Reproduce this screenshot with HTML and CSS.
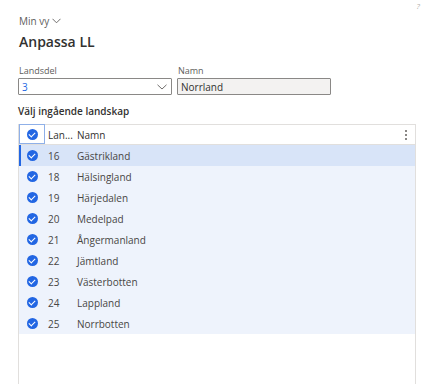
FILE: index.html
```html
<!DOCTYPE html>
<html lang="sv">
<head>
    <meta charset="UTF-8">
    <meta name="viewport" content="width=device-width, initial-scale=1.0">
    <title>Anpassa LL</title>
    <link rel="stylesheet" href="styles.css">
</head>
<body>
    <div class="topbar">
        <span class="help">?</span>
    </div>

    <div class="page">
        <div class="view">Min vy
            <svg class="view-chevron" width="9" height="6" viewBox="0 0 9 6"><path d="M0.5 0.8 L4.5 4.8 L8.5 0.8" fill="none" stroke="#605e5c" stroke-width="0.9"/></svg>
        </div>
        <h1 class="title">Anpassa LL</h1>

        <div class="fields">
            <div class="field">
                <label class="field-label">Landsdel</label>
                <div class="input select">
                    <span class="input-value link">3</span>
                    <svg class="select-chevron" width="10" height="6" viewBox="0 0 10 6"><path d="M0.5 0.8 L5 5 L9.5 0.8" fill="none" stroke="#605e5c" stroke-width="0.9"/></svg>
                </div>
            </div>
            <div class="field">
                <label class="field-label">Namn</label>
                <div class="input readonly">
                    <span class="input-value">Norrland</span>
                </div>
            </div>
        </div>

        <h2 class="section-title">Välj ingående landskap</h2>

        <div class="grid">
            <div class="grid-header">
                <div class="cell-check header-check">
                    <span class="check"></span>
                </div>
                <div class="cell-num">Lan...</div>
                <div class="cell-name">Namn</div>
                <div class="cell-more">
                    <svg width="4" height="12" viewBox="0 0 4 12"><rect x="1" y="1" width="2" height="2" fill="#8a8886"/><rect x="1" y="5" width="2" height="2" fill="#8a8886"/><rect x="1" y="9" width="2" height="2" fill="#8a8886"/></svg>
                </div>
            </div>

            <div class="grid-row active">
                <div class="cell-check"><span class="check"></span></div>
                <div class="cell-num">16</div>
                <div class="cell-name">Gästrikland</div>
            </div>
            <div class="grid-row">
                <div class="cell-check"><span class="check"></span></div>
                <div class="cell-num">18</div>
                <div class="cell-name">Hälsingland</div>
            </div>
            <div class="grid-row">
                <div class="cell-check"><span class="check"></span></div>
                <div class="cell-num">19</div>
                <div class="cell-name">Härjedalen</div>
            </div>
            <div class="grid-row">
                <div class="cell-check"><span class="check"></span></div>
                <div class="cell-num">20</div>
                <div class="cell-name">Medelpad</div>
            </div>
            <div class="grid-row">
                <div class="cell-check"><span class="check"></span></div>
                <div class="cell-num">21</div>
                <div class="cell-name">Ångermanland</div>
            </div>
            <div class="grid-row">
                <div class="cell-check"><span class="check"></span></div>
                <div class="cell-num">22</div>
                <div class="cell-name">Jämtland</div>
            </div>
            <div class="grid-row">
                <div class="cell-check"><span class="check"></span></div>
                <div class="cell-num">23</div>
                <div class="cell-name">Västerbotten</div>
            </div>
            <div class="grid-row">
                <div class="cell-check"><span class="check"></span></div>
                <div class="cell-num">24</div>
                <div class="cell-name">Lappland</div>
            </div>
            <div class="grid-row">
                <div class="cell-check"><span class="check"></span></div>
                <div class="cell-num">25</div>
                <div class="cell-name">Norrbotten</div>
            </div>
            <div class="grid-empty"></div>
        </div>
    </div>
</body>
</html>
```

FILE: styles.css
```css
:root {
    --text-color: #323130;
    --muted-color: #605e5c;
    --border-color: #e1dfdd;
    --check-color: #2266e3;
    --row-color: #eef3fc;
    --row-active-color: #d8e4f8;
}

* {
    margin: 0;
    padding: 0;
    box-sizing: border-box;
}

body {
    font-family: 'Open Sans', 'Liberation Sans', sans-serif;
    color: var(--text-color);
    background-color: #fff;
    overflow: hidden;
}

.topbar {
    height: 14px;
    display: flex;
    justify-content: flex-end;
    align-items: flex-start;
    padding-right: 9px;
}

.help {
    font-size: 8px;
    line-height: 11px;
    color: #b3b0ad;
    font-style: italic;
}

.page {
    padding-left: 18px;
}

.view {
    display: flex;
    align-items: center;
    gap: 3px;
    font-size: 10px;
    line-height: 14px;
    color: var(--muted-color);
    margin-left: 1px;
}

.title {
    font-size: 14px;
    font-weight: 600;
    line-height: 20px;
    margin-top: 4px;
    margin-left: 1px;
}

.fields {
    display: flex;
    gap: 5px;
    margin-top: 12px;
}

.field {
    display: flex;
    flex-direction: column;
    gap: 1px;
}

.field-label {
    font-size: 9px;
    line-height: 13px;
    color: var(--muted-color);
    margin-left: 1px;
}

.input {
    width: 154px;
    height: 17px;
    border: 1px solid #8a8886;
    border-radius: 1px;
    display: flex;
    align-items: center;
    justify-content: space-between;
    padding: 0 4px 0 3px;
    font-size: 10px;
}

.readonly {
    background-color: #f3f2f1;
}

.link {
    color: #2266e3;
}

.section-title {
    font-size: 10px;
    font-weight: 600;
    line-height: 14px;
    margin-top: 9px;
}

.grid {
    width: 398px;
    margin-top: 6px;
    border: 1px solid var(--border-color);
    border-bottom: none;
}

.grid-header,
.grid-row {
    display: flex;
    align-items: center;
    height: 21px;
    font-size: 10px;
}

.grid-header {
    height: 20px;
    border-bottom: 1px solid var(--border-color);
    color: var(--text-color);
}

.grid-row {
    background-color: var(--row-color);
    color: #484644;
}

.grid-row.active {
    background-color: var(--row-active-color);
    box-shadow: inset 2px 0 0 var(--check-color);
}

.cell-check {
    width: 26px;
    height: 100%;
    display: flex;
    align-items: center;
    justify-content: center;
}

.header-check {
    border: 1px solid #8fb0e8;
    height: 20px;
    margin-top: -1px;
}

.check {
    width: 11px;
    height: 11px;
    border-radius: 50%;
    background-color: var(--check-color);
    position: relative;
}

.check::after {
    content: '';
    position: absolute;
    left: 3.5px;
    top: 2.2px;
    width: 3px;
    height: 5px;
    border-right: 1.2px solid #fff;
    border-bottom: 1.2px solid #fff;
    transform: rotate(45deg);
}

.cell-num {
    width: 32px;
    padding-left: 3px;
}

.cell-name {
    flex: 1;
}

.cell-more {
    width: 18px;
    display: flex;
    justify-content: center;
}

.grid-empty {
    height: 60px;
}
```
